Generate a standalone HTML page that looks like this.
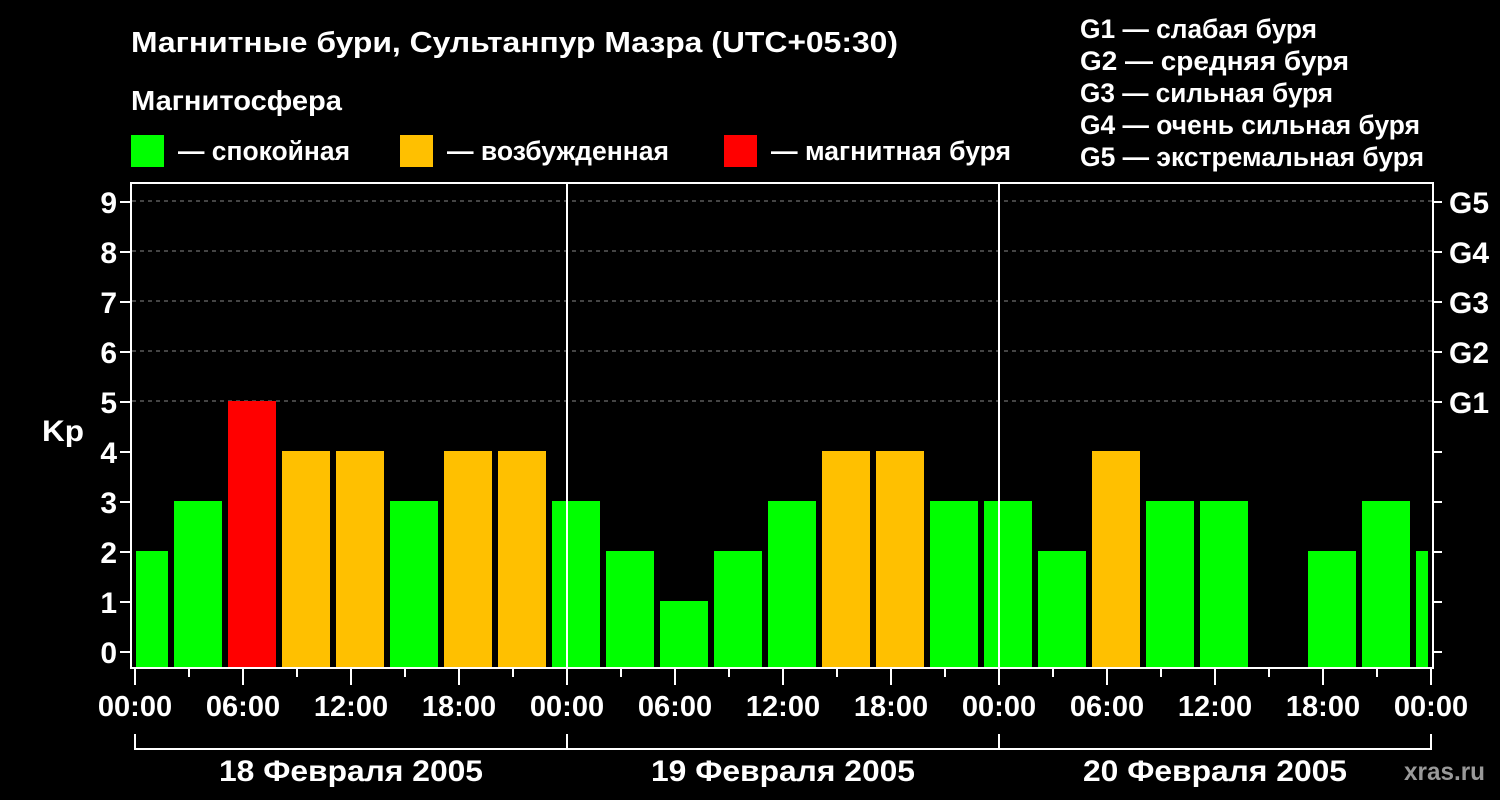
<!DOCTYPE html>
<html><head><meta charset="utf-8"><style>
html,body{margin:0;padding:0;background:#000;}
svg{display:block}
text{font-family:"Liberation Sans","DejaVu Sans",sans-serif;font-weight:bold;fill:#fff}
</style></head><body>
<svg width="1500" height="800" viewBox="0 0 1500 800">
<rect width="1500" height="800" fill="#000"/>
<text x="131" y="52" font-size="29" textLength="767" lengthAdjust="spacingAndGlyphs">Магнитные бури, Сультанпур Мазра (UTC+05:30)</text>
<text x="131" y="110" font-size="28" textLength="211" lengthAdjust="spacingAndGlyphs">Магнитосфера</text>
<rect x="131" y="135" width="33" height="32" fill="#00ff00"/>
<text x="178" y="160" font-size="27" textLength="172" lengthAdjust="spacingAndGlyphs">— спокойная</text>
<rect x="400" y="135" width="33" height="32" fill="#ffc000"/>
<text x="447" y="160" font-size="27" textLength="222" lengthAdjust="spacingAndGlyphs">— возбужденная</text>
<rect x="724" y="135" width="33" height="32" fill="#ff0000"/>
<text x="771" y="160" font-size="27" textLength="240" lengthAdjust="spacingAndGlyphs">— магнитная буря</text>
<g font-size="27">
<text x="1080" y="38" textLength="237" lengthAdjust="spacingAndGlyphs">G1 — слабая буря</text>
<text x="1080" y="70" textLength="269" lengthAdjust="spacingAndGlyphs">G2 — средняя буря</text>
<text x="1080" y="102" textLength="253" lengthAdjust="spacingAndGlyphs">G3 — сильная буря</text>
<text x="1080" y="134" textLength="340" lengthAdjust="spacingAndGlyphs">G4 — очень сильная буря</text>
<text x="1080" y="166" textLength="344" lengthAdjust="spacingAndGlyphs">G5 — экстремальная буря</text>
</g>
<g stroke="#888" stroke-width="1" stroke-dasharray="4,4">
<line x1="132" y1="201" x2="1432" y2="201"/><line x1="132" y1="251" x2="1432" y2="251"/>
<line x1="132" y1="301" x2="1432" y2="301"/><line x1="132" y1="351" x2="1432" y2="351"/>
<line x1="132" y1="401" x2="1432" y2="401"/>
</g>
<g id="bars">
<rect x="136" y="551" width="32" height="117" fill="#00ff00"/>
<rect x="174" y="501" width="48" height="167" fill="#00ff00"/>
<rect x="228" y="401" width="48" height="267" fill="#ff0000"/>
<rect x="282" y="451" width="48" height="217" fill="#ffc000"/>
<rect x="336" y="451" width="48" height="217" fill="#ffc000"/>
<rect x="390" y="501" width="48" height="167" fill="#00ff00"/>
<rect x="444" y="451" width="48" height="217" fill="#ffc000"/>
<rect x="498" y="451" width="48" height="217" fill="#ffc000"/>
<rect x="552" y="501" width="48" height="167" fill="#00ff00"/>
<rect x="606" y="551" width="48" height="117" fill="#00ff00"/>
<rect x="660" y="601" width="48" height="67" fill="#00ff00"/>
<rect x="714" y="551" width="48" height="117" fill="#00ff00"/>
<rect x="768" y="501" width="48" height="167" fill="#00ff00"/>
<rect x="822" y="451" width="48" height="217" fill="#ffc000"/>
<rect x="876" y="451" width="48" height="217" fill="#ffc000"/>
<rect x="930" y="501" width="48" height="167" fill="#00ff00"/>
<rect x="984" y="501" width="48" height="167" fill="#00ff00"/>
<rect x="1038" y="551" width="48" height="117" fill="#00ff00"/>
<rect x="1092" y="451" width="48" height="217" fill="#ffc000"/>
<rect x="1146" y="501" width="48" height="167" fill="#00ff00"/>
<rect x="1200" y="501" width="48" height="167" fill="#00ff00"/>
<rect x="1308" y="551" width="48" height="117" fill="#00ff00"/>
<rect x="1362" y="501" width="48" height="167" fill="#00ff00"/>
<rect x="1416" y="551" width="12" height="117" fill="#00ff00"/>
</g>
<g stroke="#fff" stroke-width="2" fill="none">
<rect x="131" y="183" width="1302" height="485"/>
<line x1="567" y1="183" x2="567" y2="668"/><line x1="999" y1="183" x2="999" y2="668"/>
<path d="M120 652H131M120 602H131M120 552H131M120 502H131M120 452H131M120 402H131M120 352H131M120 302H131M120 252H131M120 202H131"/>
<path d="M1433 652H1442M1433 602H1442M1433 552H1442M1433 502H1442M1433 452H1442M1433 402H1442M1433 352H1442M1433 302H1442M1433 252H1442M1433 202H1442"/>
<path d="M135 668V685M189 668V677M243 668V685M297 668V677M351 668V685M405 668V677M459 668V685M513 668V677M567 668V685M621 668V677M675 668V685M729 668V677M783 668V685M837 668V677M891 668V685M945 668V677M999 668V685M1053 668V677M1107 668V685M1161 668V677M1215 668V685M1269 668V677M1323 668V685M1377 668V677M1431 668V685"/>
<path d="M135 734V750M567 734V750M999 734V750M1431 734V750M135 749H1431"/>
</g>
<g font-size="30" text-anchor="end">
<text x="117" y="663">0</text><text x="117" y="613">1</text><text x="117" y="563">2</text>
<text x="117" y="513">3</text><text x="117" y="463">4</text><text x="117" y="413">5</text>
<text x="117" y="363">6</text><text x="117" y="313">7</text><text x="117" y="263">8</text>
<text x="117" y="213">9</text>
</g>
<text x="42" y="441" font-size="30" textLength="42" lengthAdjust="spacingAndGlyphs">Kp</text>
<g font-size="30">
<text x="1449" y="213">G5</text><text x="1449" y="263">G4</text><text x="1449" y="313">G3</text>
<text x="1449" y="363">G2</text><text x="1449" y="413">G1</text>
</g>
<g font-size="29" text-anchor="middle">
<text x="135" y="716">00:00</text><text x="243" y="716">06:00</text><text x="351" y="716">12:00</text>
<text x="459" y="716">18:00</text><text x="567" y="716">00:00</text><text x="675" y="716">06:00</text>
<text x="783" y="716">12:00</text><text x="891" y="716">18:00</text><text x="999" y="716">00:00</text>
<text x="1107" y="716">06:00</text><text x="1215" y="716">12:00</text><text x="1323" y="716">18:00</text>
<text x="1431" y="716">00:00</text>
</g>
<g font-size="30">
<text x="219" y="781" textLength="264" lengthAdjust="spacingAndGlyphs">18 Февраля 2005</text>
<text x="651" y="781" textLength="264" lengthAdjust="spacingAndGlyphs">19 Февраля 2005</text>
<text x="1083" y="781" textLength="264" lengthAdjust="spacingAndGlyphs">20 Февраля 2005</text>
</g>
<text x="1404" y="780" font-size="25" textLength="81" lengthAdjust="spacingAndGlyphs" style="fill:#999">xras.ru</text>
</svg>
</body></html>
